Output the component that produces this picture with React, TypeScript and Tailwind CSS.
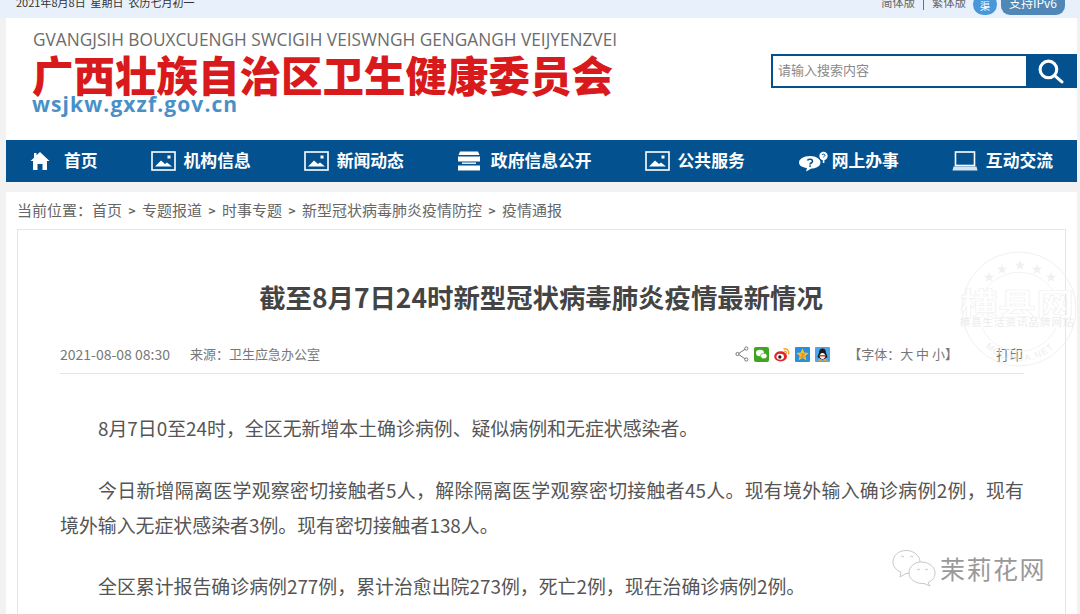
import React from "react";

const cjk = { fontFamily: '"Noto Sans CJK SC", "Noto Sans", sans-serif' };

function Pic() {
  return (
    <svg width="25" height="20" viewBox="0 0 25 20" fill="none">
      <rect x="1" y="1" width="23" height="18" stroke="white" strokeWidth="1.6" />
      <path d="M4 15.500 L10 9.500 L14 13 L16 11.500 L21 15.500 Z" fill="white" />
      <rect x="16.500" y="4.500" width="3" height="3" fill="white" />
    </svg>
  );
}
function Home() {
  return (
    <svg width="20" height="20" viewBox="0 0 20 20" fill="white">
      <path d="M10 1 L19.500 10 L17 10 L17 19 L12.500 19 L12.500 13 L7.500 13 L7.500 19 L3 19 L3 10 L0.500 10 L4 6.700 L4 2 L6.500 2 L6.500 4.300 Z" />
    </svg>
  );
}
function Gov() {
  return (
    <svg width="24" height="20" viewBox="0 0 24 20" fill="white">
      <path d="M3 0.500 H21 L22.500 4 H1.500 Z" />
      <rect x="1" y="5.500" width="22" height="5" />
      <rect x="1" y="14.500" width="22" height="5" />
      <rect x="5" y="11.500" width="14" height="1.400" />
    </svg>
  );
}
function Chat() {
  return (
    <svg width="31" height="21" viewBox="0 0 31 21" fill="white">
      <path d="M12 5 C18.500 5 22.500 8 22.500 11.500 C22.500 15 18.500 17.500 13.500 17.500 L8 20.500 L9 17 C4 16.500 1 14.500 1 11.500 C1 8 5.500 5 12 5 Z" />
      <circle cx="25.500" cy="5" r="4.200" />
      <rect x="24.800" y="8.500" width="1.600" height="3.500" />
      <path d="M9.500 9.500 C10 7.800 14.500 7.800 14.500 10.300 C14.500 12 12 12 12 13.500" stroke="#03528f" strokeWidth="1.600" fill="none" />
      <rect x="11.200" y="14.300" width="1.600" height="1.600" fill="#03528f" />
      <path d="M24 4 C24.300 2.800 27 2.800 27 4.300 C27 5.300 25.500 5.300 25.500 6.300" stroke="#03528f" strokeWidth="1" fill="none" />
    </svg>
  );
}
function Laptop() {
  return (
    <svg width="26" height="20" viewBox="0 0 26 20" fill="none">
      <rect x="3.500" y="1" width="19" height="13.500" stroke="white" strokeWidth="1.600" />
      <path d="M1.500 15.500 H24.500 L25.500 19.500 H0.500 Z" fill="white" fillOpacity="0.85" />
    </svg>
  );
}

const navItems: { icon: React.ReactNode; label: string; gap: string }[] = [
  { icon: <Home />, label: "首页", gap: "gap-[14px]" },
  { icon: <Pic />, label: "机构信息", gap: "gap-2" },
  { icon: <Pic />, label: "新闻动态", gap: "gap-2" },
  { icon: <Gov />, label: "政府信息公开", gap: "gap-[10px]" },
  { icon: <Pic />, label: "公共服务", gap: "gap-2" },
  { icon: <Chat />, label: "网上办事", gap: "gap-[3px]" },
  { icon: <Laptop />, label: "互动交流", gap: "gap-2" },
];

function Share() {
  return (
    <svg width="14" height="16" viewBox="0 0 14 16" fill="none" stroke="#777" strokeWidth="1">
      <path d="M11 2.500 L3 8 L11 13.500" />
      <circle cx="11.300" cy="2.500" r="1.600" fill="white" />
      <circle cx="2.500" cy="8" r="1.600" fill="white" />
      <circle cx="11.300" cy="13.500" r="1.600" fill="white" />
    </svg>
  );
}
function Wechat() {
  return (
    <svg width="15" height="15" viewBox="0 0 15 15">
      <rect width="15" height="15" rx="2" fill="#3fa51f" />
      <ellipse cx="6" cy="6" rx="4" ry="3.300" fill="white" />
      <ellipse cx="9.800" cy="9" rx="3.300" ry="2.700" fill="white" stroke="#3fa51f" strokeWidth="0.600" />
    </svg>
  );
}
function Weibo() {
  return (
    <svg width="16" height="15" viewBox="0 0 17 16">
      <ellipse cx="7" cy="10" rx="6.800" ry="5.400" fill="#e0262c" />
      <ellipse cx="6.600" cy="10.500" rx="4" ry="3.200" fill="white" />
      <circle cx="6.200" cy="10.600" r="1.800" fill="#222" />
      <path d="M10 2 C13.500 1 16.500 4 15.500 8" stroke="#f5a623" strokeWidth="1.500" fill="none" />
      <path d="M10.500 4.500 C12.500 4 14 5.500 13.400 7.500" stroke="#f5a623" strokeWidth="1.200" fill="none" />
    </svg>
  );
}
function QZone() {
  return (
    <svg width="15" height="15" viewBox="0 0 15 15">
      <rect width="15" height="15" rx="1" fill="#2a8fdc" />
      <path d="M7.500 1.500 L9.300 5.500 L13.800 6 L10.400 8.800 L11.400 13.200 L7.500 11 L3.600 13.200 L4.600 8.800 L1.200 6 L5.700 5.500 Z" fill="#fbc02d" />
      <path d="M5.500 7 H9.500 L5.800 10 H9.800" stroke="#c9801a" strokeWidth="0.900" fill="none" />
    </svg>
  );
}
function QQ() {
  return (
    <svg width="15" height="15" viewBox="0 0 15 15">
      <rect width="15" height="15" rx="1" fill="#4da6e8" />
      <path d="M7.500 1.500 C10 1.500 11 3.500 11 6 C12 8 12.800 10 12 11 L10.800 10.200 C10.500 11.500 9.500 12.500 7.500 12.500 C5.500 12.500 4.500 11.500 4.200 10.200 L3 11 C2.200 10 3 8 4 6 C4 3.500 5 1.500 7.500 1.500 Z" fill="#1a1a1a" />
      <ellipse cx="7.500" cy="9" rx="2.600" ry="3" fill="white" />
      <path d="M4 8 H11 L10.500 9.500 H4.500 Z" fill="#e33b2e" />
      <ellipse cx="5" cy="13" rx="2" ry="1" fill="#f5a623" />
      <ellipse cx="10" cy="13" rx="2" ry="1" fill="#f5a623" />
    </svg>
  );
}

function Watermark() {
  const stars = [
    [29, 31],
    [42, 23],
    [60, 19],
    [77, 23],
    [91, 31],
  ];
  return (
    <div className="absolute left-[960px] top-[250px] w-[120px] h-[120px] pointer-events-none">
      <svg width="120" height="120" viewBox="0 0 120 120" fill="none">
        <defs>
          <path id="wm-arc" d="M12 72 A49 49 0 0 0 108 72" />
        </defs>
        <circle cx="59" cy="59" r="57" stroke="#f0f0f0" />
        <path d="M24 42 A41 41 0 0 1 94 42" stroke="#f3f3f3" />
        <path d="M22 78 A41 41 0 0 0 96 78" stroke="#f3f3f3" />
        {stars.map(([x, y]) => (
          <text key={x} x={x} y={y} textAnchor="middle" fontSize="11" fill="#f0f0f0">★</text>
        ))}
        <g transform="translate(57 65) scale(1 0.8)">
          <text x="0" y="0" textAnchor="middle" fontSize="38" fontWeight="700" fill="#ffffff" stroke="#efefef" strokeWidth="0.7" style={cjk}>横县网</text>
        </g>
        <text x="57" y="76" textAnchor="middle" fontSize="10.500" letterSpacing="1" fill="#ececec" style={cjk}>横县生活资讯品牌网站</text>
        <text fontSize="9" letterSpacing="1.400" fill="#ececec" fontFamily="Liberation Sans">
          <textPath href="#wm-arc" startOffset="50%" textAnchor="middle">MOLIHUA.NET</textPath>
        </text>
      </svg>
    </div>
  );
}

function Logo() {
  return (
    <div className="absolute left-[892px] top-[549px] flex items-center gap-[3px] pointer-events-none">
      <svg width="45" height="38" viewBox="0 0 45 38" fill="none" stroke="#c8c8c8" strokeWidth="1">
        <path d="M14 1.500 C22 1.500 28 7 28 13 C28 20 22 24.500 14 24.500 L8 28 L9 23 C4 21 1 17.500 1 13 C1 7 6 1.500 14 1.500 Z" fill="white" />
        <path d="M29 13 C37 13 43 18 43 24 C43 29 40 32 36 33.500 L38 37 L32 34.500 C24 35 17 30.500 17 24 C17 18 22 13 29 13 Z" fill="white" />
        <path d="M9 8 L10.500 7 L12 8 M18 8 L19.500 7 L21 8 M25 21 L26.500 20 L28 21 M33 21 L34.500 20 L36 21" />
      </svg>
      <span className="text-[25px] leading-none text-[#999] tracking-[1.500px]" style={cjk}>茉莉花网</span>
    </div>
  );
}

const Sep = () => <span className="inline-block w-[20px] text-center text-[12px] font-bold">&gt;</span>;

export default function App() {
  return (
    <div className="relative w-[1080px] h-[614px] overflow-hidden bg-[#f2f2f2] text-[#555]" style={cjk}>
      <div className="h-[18px] bg-[#e8f0fb] overflow-hidden flex justify-between pl-4 pr-[15px]">
        <div className="-mt-[5px] h-[14px] text-[11px] leading-[14px] whitespace-pre text-[#333]">2021年8月8日  星期日  农历七月初一</div>
        <div className="flex items-start -mt-[5px] text-[11.300px]">
          <span className="leading-[14px] text-[#666]">简体版</span>
          <span className="mx-2 mt-[3px] w-px h-[12px] bg-[#a45a4c]" />
          <span className="leading-[14px] text-[#666]">繁体版</span>
          <span className="ml-[7px] mt-[-1px] w-6 h-[21px] rounded-full bg-[#4a97d8] flex items-center justify-center text-white text-[10px] leading-none">
            <span className="mt-[3px]">渠</span>
          </span>
          <span className="ml-1 mt-[-1px] w-[64px] h-[21px] rounded-b-[9px] bg-[#5087b6] text-white text-[12px] text-center leading-[18px]">支持IPv6</span>
        </div>
      </div>

      <div className="mx-[6px] w-[1071px] h-[122px] bg-white flex justify-between items-start">
        <div className="pl-[27px] pt-[12px]">
          <div className="text-[17.250px] leading-[20px] text-[#6b6b6b] whitespace-nowrap" style={{ fontFamily: '"Open Sans", sans-serif' }}>
            GVANGJSIH BOUXCUENGH SWCIGIH VEISWNGH GENGANGH VEIJYENZVEI
          </div>
          <div className="text-[41.500px] leading-[48px] font-black text-[#d91a1d] whitespace-nowrap -ml-[1px]">广西壮族自治区卫生健康委员会</div>
          <div className="text-[21px] leading-[24px] font-bold tracking-[1.100px] text-[#4a90c8] -mt-[6px] -ml-[1px]" style={{ fontFamily: '"Open Sans", sans-serif' }}>wsjkw.gxzf.gov.cn</div>
        </div>
        <div className="mt-[36px] flex w-[306px] h-[34px] border-[2px] border-[#03528f]">
          <div className="flex-1 bg-white text-[13px] leading-[28px] pl-[5px] text-[#8a8a8a]">请输入搜索内容</div>
          <div className="w-[49px] bg-[#03528f] flex items-center justify-center">
            <svg width="27" height="27" viewBox="0 0 26 26" fill="none" stroke="white" strokeWidth="3" strokeLinecap="round">
              <circle cx="11" cy="11" r="8" />
              <path d="M17 17 L24 23" />
            </svg>
          </div>
        </div>
      </div>

      <div className="mx-[6px] w-[1071px] h-[42px] bg-[#03528f] flex items-center justify-between pl-[24px] pr-[24px] text-white text-[16.800px] font-bold">
        {navItems.map((n) => (
          <div key={n.label} className={`flex items-center ${n.gap} whitespace-nowrap`}>
            {n.icon}
            <span>{n.label}</span>
          </div>
        ))}
      </div>

      <div className="mt-[10px] mx-[6px] w-[1071px] h-[422px] bg-white px-[11px]">
        <div className="h-[37px] flex items-center text-[15px] whitespace-pre text-[#666]">
          当前位置：首页<Sep />专题报道<Sep />时事专题<Sep />新型冠状病毒肺炎疫情防控<Sep />疫情通报
        </div>
        <div className="w-[1049px] h-[400px] border border-[#e6e6e6] px-[42px]">
          <h1 className="mt-[49px] text-center text-[26.400px] leading-[36px] font-bold text-[#444] -ml-[1px]">截至8月7日24时新型冠状病毒肺炎疫情最新情况</h1>
          <div className="mt-[28px] h-[31px] w-[964px] border-b border-[#e4e4e4] flex items-start text-[13px] leading-[22px] text-[#777]">
            <span className="text-[14px]">2021-08-08 08:30</span>
            <span className="ml-5">来源：卫生应急办公室</span>
            <span className="ml-auto mr-[18px] flex items-center gap-[5px] h-[22px]">
              <Share /><Wechat /><Weibo /><QZone /><QQ />
            </span>
            <span className="whitespace-pre">【字体：大 中 小】</span>
            <span className="ml-[38px] mr-[1px] text-[13.500px]">打印</span>
          </div>
          <div className="mt-[36px] text-[18.900px] leading-[35px] text-[#555] w-[964px] text-justify">
            <p className="indent-[38px]">8月7日0至24时，全区无新增本土确诊病例、疑似病例和无症状感染者。</p>
            <p className="indent-[38px] mt-[27px]">今日新增隔离医学观察密切接触者5人，解除隔离医学观察密切接触者45人。现有境外输入确诊病例2例，现有境外输入无症状感染者3例。现有密切接触者138人。</p>
            <p className="indent-[38px] mt-[26px]">全区累计报告确诊病例277例，累计治愈出院273例，死亡2例，现在治确诊病例2例。</p>
          </div>
        </div>
      </div>

      <Watermark />
      <Logo />
    </div>
  );
}
